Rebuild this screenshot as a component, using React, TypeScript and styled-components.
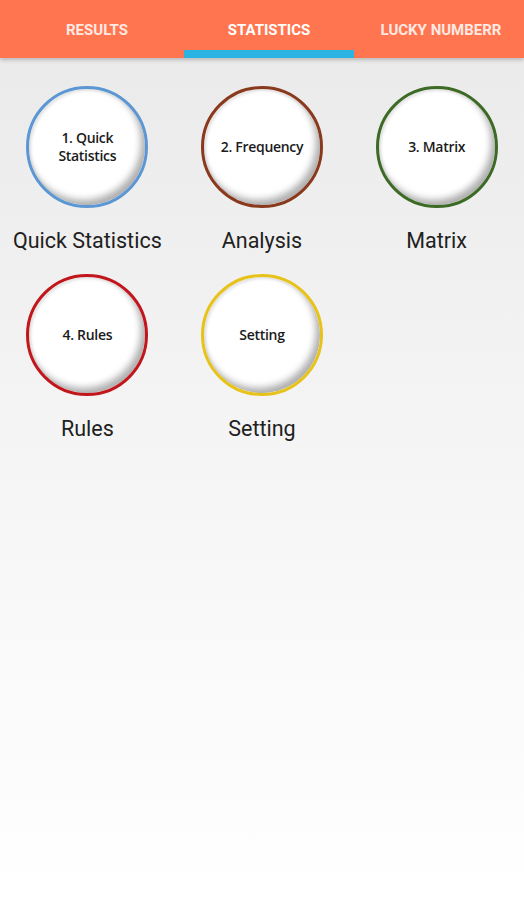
import styled, { createGlobalStyle } from "styled-components";

const GlobalStyle = createGlobalStyle`
  html, body { margin: 0; padding: 0; }
  body {
    font-family: Roboto, "Liberation Sans", sans-serif;
    background: #fff;
  }
`;

const Page = styled.div`
  width: 524px;
  min-height: 900px;
  background: linear-gradient(to bottom, #e9e9e9 0%, #f6f6f6 55%, #ffffff 100%);
`;

const TabBar = styled.div`
  display: grid;
  grid-template-columns: 184px 170px 170px;
  height: 58px;
  background: #ff7550;
  box-shadow: 0 2px 4px rgba(0, 0, 0, 0.22);
  position: relative;
`;

const Tab = styled.div<{ $active?: boolean; $shift?: number }>`
  display: flex;
  align-items: center;
  justify-content: center;
  padding-left: ${(p) => p.$shift ?? 0}px;
  padding-top: 10px;
  font-size: 15px;
  font-weight: 700;
  color: ${(p) => (p.$active ? "#ffffff" : "#ffe9e2")};
  white-space: nowrap;
  border-bottom: 8px solid ${(p) => (p.$active ? "#2ab4e3" : "transparent")};
`;

const Grid = styled.div`
  display: grid;
  grid-template-columns: repeat(3, 1fr);
  row-gap: 20px;
  padding-top: 28px;
`;

const Item = styled.div`
  display: flex;
  flex-direction: column;
  align-items: center;
`;

const Circle = styled.div<{ $ring: string }>`
  width: 122px;
  height: 122px;
  box-sizing: border-box;
  border-radius: 50%;
  border: 3px solid ${(p) => p.$ring};
  background: #fff;
  box-shadow: inset -4px -5px 7px rgba(0, 0, 0, 0.32),
    inset 2px 2px 3px rgba(0, 0, 0, 0.1);
  display: flex;
  align-items: center;
  justify-content: center;
  text-align: center;
  font-family: "Open Sans", "Noto Sans", sans-serif;
  font-size: 14px;
  font-weight: 600;
  line-height: 18px;
  color: #1b1b1b;
  letter-spacing: -0.3px;
`;

const Label = styled.div`
  margin-top: 20px;
  font-size: 21.5px;
  line-height: 26px;
  color: #212121;
  white-space: nowrap;
`;

const items = [
  { inner: ["1. Quick", "Statistics"], label: "Quick Statistics", ring: "#5c97d3" },
  { inner: ["2. Frequency"], label: "Analysis", ring: "#8a3a1c" },
  { inner: ["3. Matrix"], label: "Matrix", ring: "#3d6a25" },
  { inner: ["4. Rules"], label: "Rules", ring: "#c0161c" },
  { inner: ["Setting"], label: "Setting", ring: "#e7c21b" },
];

export default function App() {
  return (
    <>
      <GlobalStyle />
      <Page>
        <TabBar>
          <Tab $shift={10}>RESULTS</Tab>
          <Tab $active>STATISTICS</Tab>
          <Tab $shift={4}>LUCKY NUMBERR</Tab>
        </TabBar>
        <Grid>
          {items.map((it) => (
            <Item key={it.label}>
              <Circle $ring={it.ring}>
                <div>
                  {it.inner.map((line) => (
                    <div key={line}>{line}</div>
                  ))}
                </div>
              </Circle>
              <Label>{it.label}</Label>
            </Item>
          ))}
        </Grid>
      </Page>
    </>
  );
}
